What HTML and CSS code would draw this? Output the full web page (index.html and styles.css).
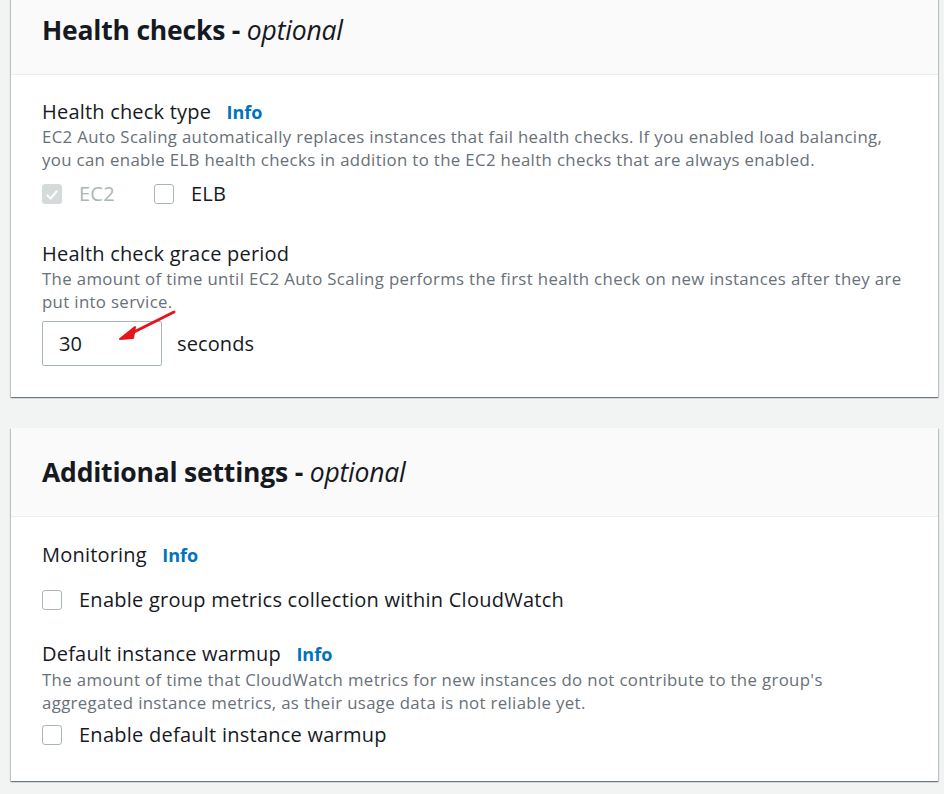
FILE: index.html
```html
<!DOCTYPE html>
<html lang="en">
<head>
<meta charset="utf-8">
<title>Health checks</title>
<link rel="stylesheet" href="styles.css">
</head>
<body>
<div class="page">
  <section class="card card-first">
    <header class="card-header">
      <h2 class="card-title">Health checks - <em>optional</em></h2>
    </header>
    <div class="card-body body-first">
      <div class="field">
        <div class="label">Health check type <a class="info">Info</a></div>
        <p class="desc">EC2 Auto Scaling automatically replaces instances that fail health checks. If you enabled load balancing, you can enable ELB health checks in addition to the EC2 health checks that are always enabled.</p>
        <div class="check-row">
          <label class="check disabled">
            <span class="box checked">
              <svg viewBox="0 0 20 20" width="20" height="20"><path d="M5 10.5l3.5 3.5 6.5-8" fill="none" stroke="#fff" stroke-width="2.4" stroke-linecap="round" stroke-linejoin="round"/></svg>
            </span>
            <span class="check-text">EC2</span>
          </label>
          <label class="check">
            <span class="box"></span>
            <span class="check-text">ELB</span>
          </label>
        </div>
      </div>
      <div class="field field-grace">
        <div class="label">Health check grace period</div>
        <p class="desc">The amount of time until EC2 Auto Scaling performs the first health check on new instances after they are put into service.</p>
        <div class="input-row">
          <div class="input-wrap">
            <div class="input">30</div>
            <svg class="arrow" viewBox="0 0 70 40" width="70" height="40"><path d="M58 4 L12 27" stroke="#e8141a" stroke-width="3" stroke-linecap="round"/><path d="M4 31 L19 19 L17 30 Z" fill="#e8141a" stroke="#e8141a" stroke-width="2" stroke-linejoin="round"/></svg>
          </div>
          <span class="unit">seconds</span>
        </div>
      </div>
    </div>
  </section>

  <section class="card card-second">
    <header class="card-header">
      <h2 class="card-title">Additional settings - <em>optional</em></h2>
    </header>
    <div class="card-body body-second">
      <div class="field">
        <div class="label">Monitoring <a class="info">Info</a></div>
        <label class="check check-single">
          <span class="box"></span>
          <span class="check-text">Enable group metrics collection within CloudWatch</span>
        </label>
      </div>
      <div class="field field-warmup">
        <div class="label">Default instance warmup <a class="info">Info</a></div>
        <p class="desc">The amount of time that CloudWatch metrics for new instances do not contribute to the group's aggregated instance metrics, as their usage data is not reliable yet.</p>
        <label class="check check-single">
          <span class="box"></span>
          <span class="check-text">Enable default instance warmup</span>
        </label>
      </div>
    </div>
  </section>
</div>
</body>
</html>
```
FILE: styles.css
```css
* { box-sizing: border-box; }
html, body { margin: 0; padding: 0; }
body {
  background: #f2f3f3;
  font-family: "Open Sans", "Noto Sans", sans-serif;
  color: #16191f;
  width: 944px;
  height: 794px;
  overflow: hidden;
}
.page {
  padding: 0 6px 0 11px;
}
.card {
  background: #fff;
  box-shadow: 0 1px 1px 0 rgba(0,28,36,.35), 1px 1px 1px 0 rgba(0,28,36,.18), -1px 1px 1px 0 rgba(0,28,36,.18);
}
.card-first { margin-top: -14px; }
.card-second { margin-top: 31px; }
.card-header {
  background: #fafafa;
  border-bottom: 1px solid #eaeded;
  height: 89px;
  display: flex;
  align-items: center;
  padding: 0 31px;
}
.card-title {
  margin: 0;
  font-size: 26.5px;
  font-weight: 700;
  letter-spacing: -0.2px;
  line-height: 34px;
  padding-bottom: 1px;
}
.card-title em { font-weight: 400; font-style: italic; }
.card-body {
  padding: 24px 30px 31px 31px;
}
.label {
  font-size: 20px;
  line-height: 26px;
  letter-spacing: 0.2px;
}
.info {
  color: #0073bb;
  font-weight: 700;
  font-size: 18px;
  letter-spacing: 0;
  margin-left: 10px;
}
.desc {
  margin: 1px 0 0;
  font-size: 16.8px;
  line-height: 22.5px;
  letter-spacing: 0.35px;
  color: #687078;
}
.check-row {
  display: flex;
  gap: 39px;
  margin-top: 11px;
}
.check {
  display: flex;
  align-items: center;
  gap: 17px;
  font-size: 20px;
  line-height: 24px;
  letter-spacing: 0.25px;
}
.box {
  width: 20px;
  height: 20px;
  flex: none;
  border: 1px solid #aab7b8;
  border-radius: 3px;
  background: #fff;
  display: flex;
}
.box.checked { background: #d5dbdb; border-color: #d5dbdb; }
.disabled .check-text { color: #aab7b8; }
.field-grace { margin-top: 35px; }
.input-row {
  display: flex;
  align-items: center;
  gap: 15px;
  margin-top: 8px;
}
.input-wrap { position: relative; }
.input {
  width: 120px;
  height: 45px;
  border: 1px solid #aab7b8;
  border-radius: 2px;
  font-size: 20px;
  line-height: 43px;
  padding-left: 16px;
}
.arrow {
  position: absolute;
  left: 74px;
  top: -13px;
}
.unit { font-size: 20px; letter-spacing: 0.1px; }
.body-second { padding-top: 25px; padding-bottom: 34px; }
.check-single { margin-top: 20px; }
.field-warmup { margin-top: 29px; }
.field-warmup .desc { margin-top: 2px; }
.field-warmup .check-single { margin-top: 9px; }
```
